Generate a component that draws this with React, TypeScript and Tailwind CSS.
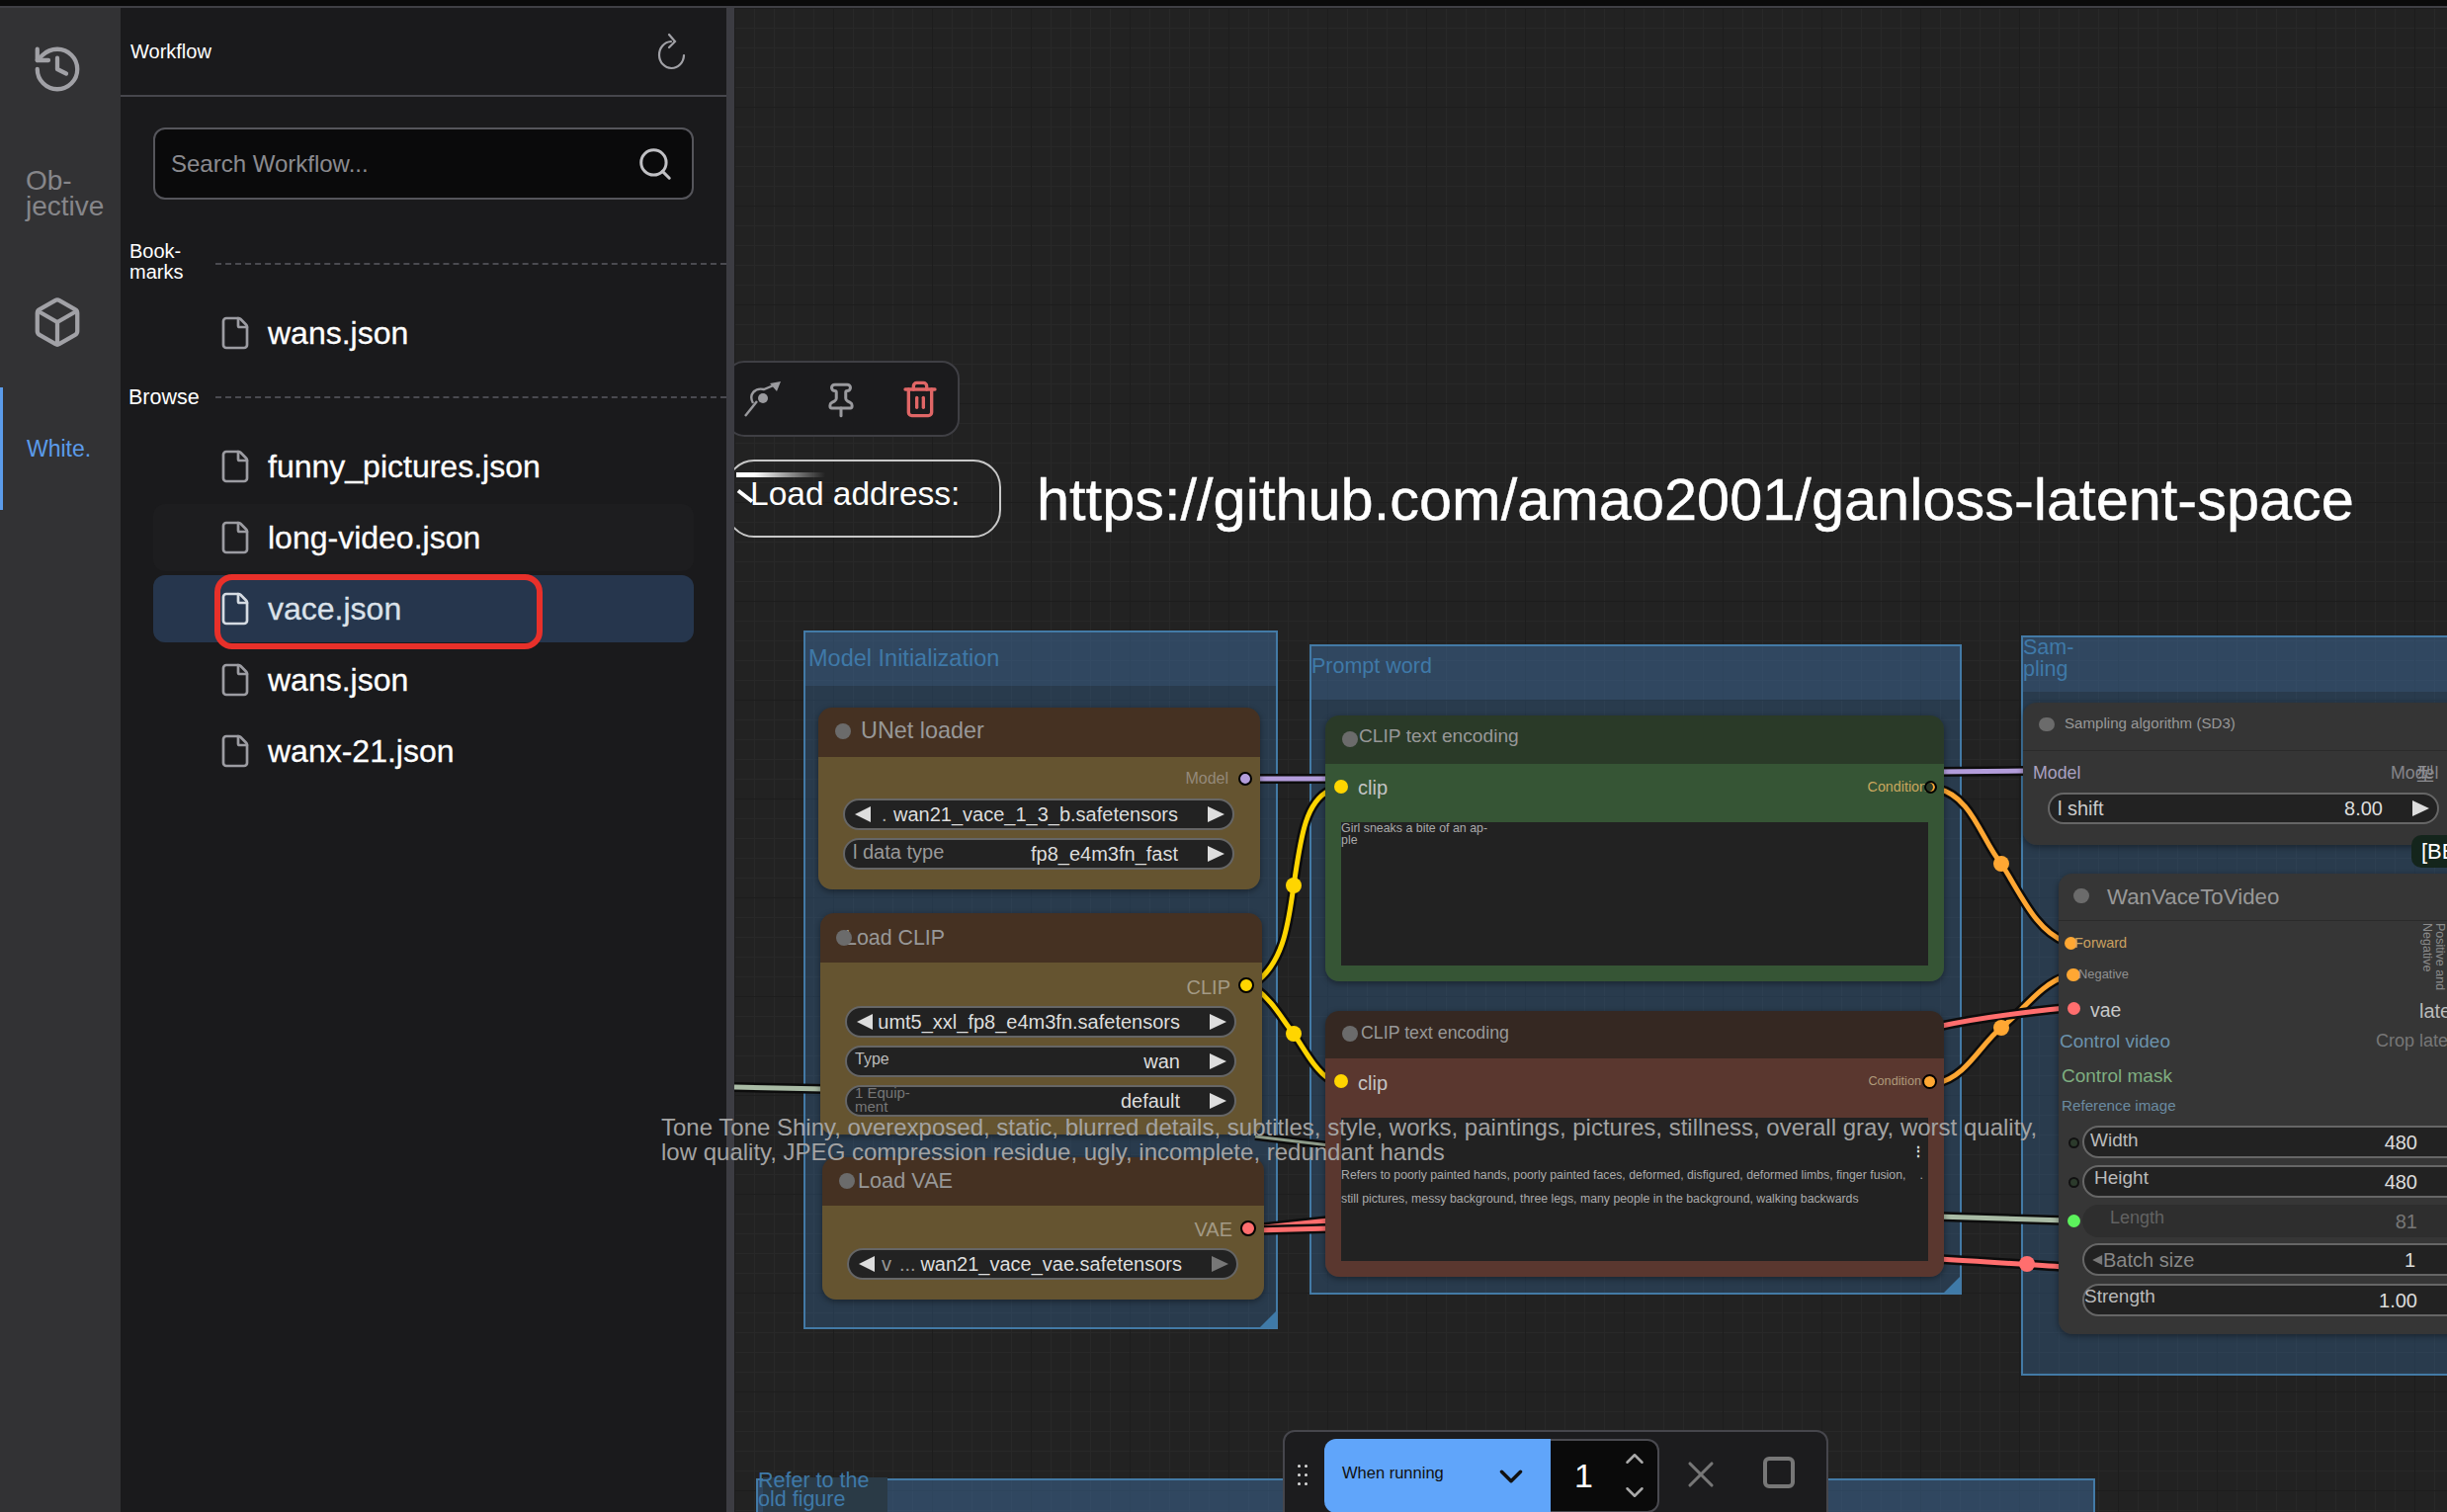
import { ReactNode } from 'react';
import { Box, ChevronDown, ChevronUp, File, History, Pin, Search, Trash2, X } from 'lucide-react';
import clsx from 'clsx';

const Tri = ({ left, className }: { left?: boolean; className?: string }) => (
  <svg width="17" height="16" viewBox="0 0 17 16" className={clsx('shrink-0', className)}>
    <polygon points={left ? '16,0 16,16 0,8' : '0,0 0,16 17,8'} fill="currentColor" />
  </svg>
);

const Widget = ({ className, children }: { className?: string; children: ReactNode }) => (
  <div className={clsx('flex h-[32px] w-[396px] items-center rounded-full border-2 border-[#666] bg-[#222] px-[8px] text-[20px] text-[#ddd]', className)}>
    {children}
  </div>
);

const Value = ({ text }: { text: string }) => (
  <>
    <span className="ml-auto">{text}</span>
    <Tri className="ml-[30px] text-[#ddd]" />
  </>
);

const Port = ({ className }: { className: string }) => (
  <span className={clsx('absolute rounded-full', className)} />
);

type NodeProps = {
  className: string;
  headerClass: string;
  bodyClass: string;
  title: string;
  titleClass: string;
  dotClass: string;
  children: ReactNode;
};

const GraphNode = ({ className, headerClass, bodyClass, title, titleClass, dotClass, children }: NodeProps) => (
  <div className={clsx('absolute flex flex-col overflow-visible rounded-[14px] shadow-[0_2px_6px_rgba(0,0,0,0.4)]', className)}>
    <div className={clsx('relative flex items-center rounded-t-[14px]', headerClass)}>
      <span className={clsx('absolute size-[16px] rounded-full bg-[#6b6b6b]', dotClass)} />
      <span className={clsx('text-[#989898]', titleClass)}>{title}</span>
    </div>
    <div className={clsx('relative flex-1 rounded-b-[14px]', bodyClass)}>{children}</div>
  </div>
);

const GroupBox = ({ className, bandClass, title, titleClass, corner = true }: { className: string; bandClass: string; title: ReactNode; titleClass: string; corner?: boolean }) => (
  <div className={clsx('absolute border-2 border-[#437aa6] bg-[rgba(58,120,180,0.3)]', className)}>
    <div className={clsx('bg-[rgba(70,110,150,0.26)] text-[#3f79a8]', bandClass)}>
      <span className={titleClass}>{title}</span>
    </div>
    {corner && <span className="absolute right-0 bottom-0 size-0 border-t-[16px] border-r-[16px] border-t-transparent border-r-[#3f7aa8]" />}
  </div>
);

const Wire = ({ d, color, width = 5 }: { d: string; color: string; width?: number }) => (
  <>
    <path d={d} fill="none" stroke="#0c0c0c" strokeWidth={width + 5} />
    <path d={d} fill="none" stroke={color} strokeWidth={width} />
  </>
);

const Wires = () => (
  <svg className="absolute top-0 left-0" width="2476" height="1530">
    <Wire d="M1266 788 L1345 788" color="#b39ddb" />
    <Wire d="M1960 781 L2050 780" color="#b39ddb" />
    <Wire d="M743 1100 L835 1102" color="#a9bba5" />
    <Wire d="M1270 1150 L1345 1159" color="#8e9c8a" width={3} />
    <Wire d="M1960 1231 L2090 1235" color="#a9bba5" />
    <Wire d="M1268 996 C1300 975 1304 930 1309 896 C1316 850 1320 812 1345 800" color="#ffd500" />
    <Wire d="M1268 998 C1290 1015 1296 1030 1309 1046 C1320 1062 1330 1082 1345 1092" color="#ffd500" />
    <Wire d="M1960 798 C1995 805 2005 850 2025 874 C2045 905 2060 942 2090 953" color="#ffa733" />
    <Wire d="M1960 1096 C1990 1090 2005 1055 2025 1040 C2045 1025 2065 995 2090 988" color="#ffa733" />
    <Wire d="M1270 1243 L1345 1235" color="#ff6e6e" />
    <Wire d="M1270 1245 L1345 1243" color="#ff6e6e" />
    <Wire d="M1960 1039 C2000 1030 2050 1024 2090 1020" color="#ff6e6e" />
    <Wire d="M1960 1274 C2000 1276 2040 1279 2090 1282" color="#ff6e6e" />
    <circle cx="1309" cy="896" r="8" fill="#ffd500" />
    <circle cx="1309" cy="1046" r="8" fill="#ffd500" />
    <circle cx="2025" cy="874" r="8" fill="#ffa733" />
    <circle cx="2025" cy="1040" r="8" fill="#ffa733" />
    <circle cx="2051" cy="1279" r="8" fill="#ff6e6e" />
  </svg>
);

const FileRow = ({ name, className, nameClass }: { name: string; className?: string; nameClass?: string }) => (
  <div className={clsx('flex h-[68px] items-center rounded-[12px] pl-[70px]', className)}>
    <File size={36} strokeWidth={1.8} className={clsx('-ml-[5px] shrink-0', nameClass ? 'text-[#d5dbe2]' : 'text-[#9c9ca2]')} />
    <span className={clsx('ml-[15px] text-[32px] [-webkit-text-stroke:0.3px_currentColor]', nameClass ?? 'text-white')}>{name}</span>
  </div>
);

const SideBar = () => (
  <>
    <div className="flex w-[122px] shrink-0 flex-col bg-[#323234]">
      <div className="flex h-[126px] items-center justify-center pr-[6px] pb-[2px]">
        <History size={54} strokeWidth={1.9} className="text-[#a1a1a6]" />
      </div>
      <p className="mt-[36px] pl-[26px] text-[28px] leading-[26px] text-[#86868a]">Ob-<br />jective</p>
      <div className="mt-[77px] flex justify-center pr-[6px]">
        <Box size={54} strokeWidth={1.9} className="text-[#a1a1a6]" />
      </div>
      <div className="mt-[39px] flex h-[124px] items-center border-l-[3px] border-[#5b9bea] pl-[24px]">
        <span className="mb-[-1px] text-[23px] text-[#5b9bea]">White.</span>
      </div>
    </div>
    <div className="w-[613px] shrink-0 bg-[#1a1a1c]">
      <div className="flex h-[90px] items-center justify-between border-b-2 border-[#46464c] pr-[38px] pl-[10px]">
        <span className="text-[20px] text-white">Workflow</span>
        <svg width="34" height="38" viewBox="0 0 34 38" fill="none" stroke="#a1a1a6" strokeWidth="2.2" strokeLinecap="round">
          <path d="M16 9 A12.5 13.5 0 1 0 29 23" />
          <path d="M14 2 L20 9 L14 15" />
        </svg>
      </div>
      <div className="mx-[33px] mt-[31px] flex h-[73px] items-center justify-between rounded-[12px] border-2 border-[#55555b] bg-[#0a0a0b] pr-[18px] pl-[16px]">
        <span className="text-[24px] text-[#8a8a8f]">Search Workflow...</span>
        <Search size={38} strokeWidth={1.9} className="text-[#c0c0c4]" />
      </div>
      <div className="mt-[42px] flex items-center pl-[9px]">
        <span className="w-[87px] text-[20px] leading-[21px] text-white">Book-<br />marks</span>
        <span className="mt-[4px] flex-1 border-t-2 border-dashed border-[#4a4a50]" />
      </div>
      <div className="mx-[33px] mt-[17px] h-[68px]">
        <FileRow name="wans.json" />
      </div>
      <div className="mt-[18px] flex items-center pl-[8px]">
        <span className="w-[88px] text-[21.5px] leading-[26px] text-white">Browse</span>
        <span className="flex-1 border-t-2 border-dashed border-[#4a4a50]" />
      </div>
      <div className="mx-[33px] mt-[23px] flex flex-col gap-[4px]">
        <FileRow name="funny_pictures.json" />
        <FileRow name="long-video.json" className="bg-[#1d1d1f]" />
        <div className="relative">
          <FileRow name="vace.json" className="bg-[#26364d]" nameClass="text-[#dbe2ea]" />
          <span className="absolute top-[-1px] left-[62px] h-[76px] w-[332px] rounded-[18px] border-[6px] border-[#e8302a]" />
        </div>
        <FileRow name="wans.json" />
        <FileRow name="wanx-21.json" />
      </div>
    </div>
    <div className="w-[8px] shrink-0 bg-[#3c3c42]" />
  </>
);

const NodeCanvas = () => (
  <div className="relative flex-1 overflow-hidden bg-[#222222] bg-[linear-gradient(#1d1d1d_1px,transparent_1px),linear-gradient(90deg,#1d1d1d_1px,transparent_1px),linear-gradient(#282828_1px,transparent_1px),linear-gradient(90deg,#282828_1px,transparent_1px)] bg-[size:100px_100px,100px_100px,20px_20px,20px_20px]">
    <div className="absolute top-[-8px] left-[-743px] h-[1530px] w-[2476px]">
      {/* selection toolbar */}
      <div className="absolute top-[365px] left-[735px] flex h-[77px] w-[236px] items-center rounded-[18px] border-2 border-[#3f3f44] bg-[#1b1b1d]">
        <svg className="absolute top-[18px] left-[15px]" width="40" height="38" viewBox="0 0 40 38" fill="none" stroke="#9a9a9e" strokeWidth="2.4">
          <path d="M2 36 L14 21" />
          <circle cx="20" cy="18" r="5" fill="#9a9a9e" stroke="none" />
          <path d="M10 23 C5 14 12 7 21 9 L33 4" />
          <polygon points="38,1 27,3 34,11" fill="#9a9a9e" stroke="none" />
        </svg>
        <Pin size={38} strokeWidth={1.9} className="absolute top-[19px] left-[95px] text-[#9a9a9e]" />
        <Trash2 size={40} strokeWidth={2} className="absolute top-[17px] left-[174px] text-[#e06666]" />
      </div>
      <div className="absolute top-[465px] left-[735px] h-[79px] w-[278px] rounded-[28px] border-2 border-[#c8c8c8]">
        <span className="absolute top-[11px] left-[8px] h-[5px] w-[90px] bg-[linear-gradient(90deg,#fff_20%,#8888_80%,transparent)]" />
        <span className="absolute top-[33px] left-[8px] h-[4px] w-[18px] rotate-[38deg] bg-white" />
        <span className="absolute top-[14px] left-[22px] text-[33.5px] leading-[38px] text-white">Load address:</span>
      </div>
      <span className="absolute top-[471px] left-[1049px] text-[59.5px] leading-[70px] whitespace-nowrap text-white [-webkit-text-stroke:0.4px_currentColor]">https://github.com/amao2001/ganloss-latent-space</span>

      <GroupBox className="top-[638px] left-[813px] h-[707px] w-[480px]" bandClass="h-[54px] pl-[3px] pt-[9px]" titleClass="text-[23.5px]" title="Model Initialization" />
      <GroupBox className="top-[652px] left-[1325px] h-[658px] w-[660px]" bandClass="h-[54px] pt-[4px]" titleClass="text-[21.5px]" title="Prompt word" />
      <GroupBox className="top-[643px] left-[2045px] h-[749px] w-[500px]" corner={false} bandClass="h-[55px] leading-[20px]" titleClass="text-[21.5px]" title={<>Sam-<br />pling</>} />
      <GroupBox className="top-[1496px] left-[765px] h-[120px] w-[1355px]" corner={false} bandClass="h-[34px]" titleClass="hidden" title="" />

      <Wires />

      {/* model loaders */}
      <GraphNode className="top-[716px] left-[828px] h-[184px] w-[447px]" headerClass="h-[50px] bg-[#453122]" bodyClass="bg-[#655430] pt-[42px] pl-[25px]" dotClass="left-[17px] top-[16px]" titleClass="ml-[43px] mb-[3px] text-[23.4px]" title="UNet loader">
        <span className="absolute top-[12px] right-[32px] text-[16px] leading-[20px] text-[#94897a]">Model</span>
        <Port className="top-[15px] right-[8px] size-[14px] border-2 border-black bg-[#b39ddb]" />
        <Widget>
          <Tri left className="ml-[2px]" />
          <span className="ml-[10px] text-[#aaa]">.</span>
          <Value text="wan21_vace_1_3_b.safetensors" />
        </Widget>
        <Widget className="mt-[8px]">
          <span className="mb-[4px] text-[#999]">l data type</span>
          <Value text="fp8_e4m3fn_fast" />
        </Widget>
      </GraphNode>

      <GraphNode className="top-[924px] left-[830px] h-[224px] w-[447px]" headerClass="h-[50px] bg-[#453122]" bodyClass="bg-[#655430] pt-[44px] pl-[25px]" dotClass="left-[16px] top-[17px]" titleClass="ml-[25px] text-[21.4px]" title="Load CLIP">
        <span className="absolute top-[13px] right-[32px] text-[20px] leading-[24px] text-[#a39a85]">CLIP</span>
        <Port className="top-[15px] right-[8px] size-[16px] border-2 border-black bg-[#ffd500]" />
        <Widget>
          <Tri left className="ml-[2px]" />
          <Value text="umt5_xxl_fp8_e4m3fn.safetensors" />
        </Widget>
        <Widget className="mt-[8px]">
          <span className="mb-[4px] text-[16px] text-[#bbb]">Type</span>
          <Value text="wan" />
        </Widget>
        <Widget className="mt-[8px]">
          <span className="mb-[2px] text-[15px] leading-[14px] text-[#777]">1 Equip-<br />ment</span>
          <Value text="default" />
        </Widget>
      </GraphNode>

      <GraphNode className="top-[1171px] left-[832px] h-[144px] w-[447px]" headerClass="h-[49px] bg-[#453122]" bodyClass="bg-[#655430] pt-[43px] pl-[25px]" dotClass="left-[17px] top-[16px]" titleClass="ml-[36px] text-[21.7px]" title="Load VAE">
        <span className="absolute top-[12px] right-[32px] text-[20px] leading-[24px] text-[#a39a85]">VAE</span>
        <Port className="top-[15px] right-[8px] size-[16px] border-2 border-black bg-[#ff6e6e]" />
        <Widget>
          <Tri left className="ml-[2px]" />
          <span className="ml-[6px] text-[#999]">v</span>
          <span className="ml-[8px] text-[#999]">...</span>
          <span className="ml-auto">wan21_vace_vae.safetensors</span>
          <Tri className="ml-[30px] text-[#777]" />
        </Widget>
      </GraphNode>

      {/* prompts */}
      <GraphNode className="top-[724px] left-[1341px] h-[269px] w-[626px]" headerClass="h-[49px] bg-[#2a3a28]" bodyClass="bg-[#365535] pt-[59px] pl-[16px]" dotClass="left-[17px] top-[16px]" titleClass="ml-[34px] mb-[6px] text-[19.2px]" title="CLIP text encoding">
        <Port className="top-[16px] left-[9px] size-[14px] bg-[#ffd500]" />
        <span className="absolute top-[12px] left-[33px] text-[20px] leading-[24px] text-[#c4c4c4]">clip</span>
        <span className="absolute top-[13px] right-[17px] text-[14.3px] leading-[20px] text-[#c9a75e]">Condition</span>
        <Port className="top-[17px] right-[7px] size-[13px] border-2 border-black bg-[#2a3a28] shadow-[inset_-2px_0_0_#ffa733]" />
        <div className="h-[145px] w-[594px] bg-[#222]">
          <p className="text-[12.4px] leading-[12px] text-[#aaa]">Girl sneaks a bite of an ap-<br />ple</p>
        </div>
      </GraphNode>

      <GraphNode className="top-[1023px] left-[1341px] h-[269px] w-[626px]" headerClass="h-[48px] bg-[#352822]" bodyClass="bg-[#5a372f] pt-[60px] pl-[16px]" dotClass="left-[17px] top-[15px]" titleClass="ml-[36px] mb-[3px] text-[17.8px] text-[#858585]" title="CLIP text encoding">
        <Port className="top-[16px] left-[9px] size-[14px] bg-[#ffd500]" />
        <span className="absolute top-[13px] left-[33px] text-[20px] leading-[24px] text-[#c4c4c4]">clip</span>
        <span className="absolute top-[13px] right-[23px] text-[12.7px] leading-[20px] text-[#b09a7a]">Condition</span>
        <Port className="top-[16px] right-[7px] size-[15px] border-2 border-black bg-[#ffa733]" />
        <div className="relative h-[145px] w-[594px] bg-[#222]">
          <span className="absolute top-[26px] right-[3px] text-[14px] leading-[16px] font-bold text-[#ddd]">⋮</span>
          <p className="pt-[46px] text-[12.3px] leading-[24px] whitespace-nowrap text-[#aaa]">
            Refers to poorly painted hands, poorly painted faces, deformed, disfigured, deformed limbs, finger fusion,
            <span className="ml-[14px]">.</span>
            <br />
            still pictures, messy background, three legs, many people in the background, walking backwards
          </p>
        </div>
      </GraphNode>

      {/* sampling */}
      <GraphNode className="top-[711px] left-[2047px] h-[144px] w-[500px]" headerClass="h-[49px] border-b border-[#2b2b2b] bg-[#353535]" bodyClass="bg-[#353535] pt-[42px] pl-[25px]" dotClass="left-[16px] top-[15px] h-[14px] w-[16px]" titleClass="ml-[42px] mb-[5px] text-[15.1px] text-[#8a8a8a]" title="Sampling algorithm (SD3)">
        <span className="absolute top-[11px] left-[10px] text-[17.8px] leading-[22px] text-[#a9a1c0]">Model</span>
        <span className="absolute top-[11px] left-[372px] text-[17.8px] leading-[22px] text-[#85858a]">Model</span>
        <span className="absolute top-[9px] left-[398px] font-['Noto_Sans_CJK_SC',sans-serif] text-[18px] leading-[26px] text-[#8e8e93]">型</span>
        <Widget>
          <span className="mb-[1px] whitespace-nowrap text-[#ccc]">l shift</span>
          <Value text="8.00" />
        </Widget>
      </GraphNode>
      <div className="absolute top-[845px] left-[2440px] h-[33px] w-[60px] rounded-[10px] bg-[#14251c] pl-[10px] text-[22px] leading-[33px] text-white">[BEL</div>

      <GraphNode className="top-[884px] left-[2083px] h-[466px] w-[460px]" headerClass="h-[48px] border-b border-[#2b2b2b] bg-[#363636]" bodyClass="bg-[#363636]" dotClass="left-[15px] top-[15px] h-[15px] w-[16px]" titleClass="ml-[49px] text-[22.3px] text-[#9a9a9a]" title="WanVaceToVideo">
        <Port className="top-[16px] left-[6px] size-[13px] bg-[#ffa733]" />
        <span className="absolute top-[12px] left-[16px] text-[14.5px] leading-[20px] text-[#c9a060]">Forward</span>
        <Port className="top-[48px] left-[8px] h-[13px] w-[14px] bg-[#ffa733]" />
        <span className="absolute top-[44px] left-[20px] text-[12.9px] leading-[20px] text-[#909090]">Negative</span>
        <Port className="top-[82px] left-[9px] size-[13px] bg-[#ff6e6e]" />
        <span className="absolute top-[78px] left-[32px] text-[19.4px] leading-[24px] text-[#c8c8c8]">vae</span>
        <span className="absolute top-[2px] left-[366px] h-[68px] text-[12.5px] leading-[13px] whitespace-nowrap text-[#8a8a8a] [writing-mode:vertical-rl]">Positive and<br />Negative</span>
        <span className="absolute top-[79px] left-[365px] text-[20px] leading-[24px] text-[#bbb]">late</span>
        <span className="absolute top-[110px] left-[321px] text-[18px] leading-[22px] text-[#777]">Crop late</span>
        <span className="absolute top-[110px] left-[1px] text-[19px] leading-[24px] text-[#6b92ab]">Control video</span>
        <span className="absolute top-[145px] left-[3px] text-[19px] leading-[24px] text-[#7fae80]">Control mask</span>
        <span className="absolute top-[177px] left-[3px] text-[15.2px] leading-[20px] text-[#6a8aa0]">Reference image</span>

        <Port className="top-[219px] left-[10px] size-[11px] border-2 border-[#111] bg-[#2c3a2c]" />
        <Port className="top-[259px] left-[10px] size-[11px] border-2 border-[#111] bg-[#2c3a2c]" />
        <Port className="top-[297px] left-[9px] size-[13px] bg-[#5cf25c]" />

        <div className="absolute top-[207px] left-[24px] flex w-[440px] flex-col gap-[7px]">
          <Widget className="h-[33px] w-[440px] pr-[99px]">
            <span className="mb-[2px] ml-[-2px] text-[19px] text-[#bbb]">Width</span>
            <span className="ml-auto">480</span>
          </Widget>
          <Widget className="h-[33px] w-[440px] pr-[99px]">
            <span className="mb-[6px] ml-[2px] text-[19px] text-[#bbb]">Height</span>
            <span className="ml-auto">480</span>
          </Widget>
          <div className="flex h-[33px] w-[440px] items-center rounded-full bg-[#2e2e2e] pr-[101px] pl-[28px] text-[20px] text-[#777]">
            <span className="mb-[6px] text-[18px] text-[#626262]">Length</span>
            <span className="ml-auto">81</span>
          </div>
          <Widget className="mt-[-1px] h-[33px] w-[440px] pr-[101px]">
            <Tri left className="h-[10px] w-[11px] text-[#777]" />
            <span className="text-[#888]">Batch size</span>
            <span className="ml-auto">1</span>
          </Widget>
          <Widget className="mt-[1px] h-[33px] w-[440px] pr-[99px] pl-0">
            <span className="mb-[6px] text-[19px] text-[#bbb]">Strength</span>
            <span className="ml-auto">1.00</span>
          </Widget>
        </div>
      </GraphNode>

      <div className="absolute top-[1495px] left-[772px] h-[40px] w-[126px] bg-[#2a3a46]" />
      <p className="absolute top-[1489px] left-[767px] text-[21.5px] leading-[19px] text-[#3f79a8]">Refer to the<br />old figure</p>

      {/* queue bar */}
      <div className="absolute top-[1447px] left-[1298px] flex h-[100px] w-[552px] items-start rounded-t-[12px] border-2 border-[#46464c] bg-[#1c1c1e] pt-[7px]">
        <div className="ml-[13px] grid w-[10px] grid-cols-2 gap-x-[4px] gap-y-[6px] pt-[26px]">
          {[0, 1, 2, 3, 4, 5].map((i) => <span key={i} className="size-[3px] rounded-full bg-[#ddd]" />)}
        </div>
        <div className="ml-[17px] flex h-[75px] w-[229px] items-center justify-between rounded-l-[12px] bg-[#60a5fa] pr-[21px] pl-[18px]">
          <span className="mb-[6px] text-[16.5px] text-[#111]">When running</span>
          <ChevronDown size={38} strokeWidth={2.2} className="text-[#111]" />
        </div>
        <div className="relative h-[75px] w-[110px] rounded-r-[12px] border-2 border-l-0 border-[#4a4a50] bg-[#0a0a0a]">
          <span className="absolute top-[15px] left-[24px] text-[34px] leading-[40px] text-white">1</span>
          <ChevronUp size={30} strokeWidth={2} className="absolute top-[3px] left-[70px] text-[#aaa]" />
          <ChevronDown size={30} strokeWidth={2} className="absolute top-[37px] left-[70px] text-[#aaa]" />
        </div>
        <X size={44} strokeWidth={1.7} className="mt-[14px] ml-[20px] text-[#777]" />
        <span className="mt-[18px] ml-[41px] size-[32px] rounded-[6px] border-4 border-[#777]" />
      </div>
    </div>
  </div>
);

export default function App() {
  return (
    <div className="relative flex h-[1530px] w-[2476px] flex-col overflow-hidden bg-[#222222] font-['Liberation_Sans',Arial,sans-serif]">
      <div className="h-[8px] shrink-0 border-b-2 border-[#3f3f44] bg-[#0a0a0a]" />
      <div className="flex flex-1">
        <SideBar />
        <NodeCanvas />
      </div>
      {/* stray prompt text lying over panel and canvas */}
      <p className="absolute top-[1128px] left-[669px] text-[24px] leading-[25px] whitespace-nowrap text-[#a3a3a3]">
        Tone Tone Shiny, overexposed, static, blurred details, subtitles, style, works, paintings, pictures, stillness, overall gray, worst quality,
        <br />
        low quality, JPEG compression residue, ugly, incomplete, redundant hands
      </p>
    </div>
  );
}
